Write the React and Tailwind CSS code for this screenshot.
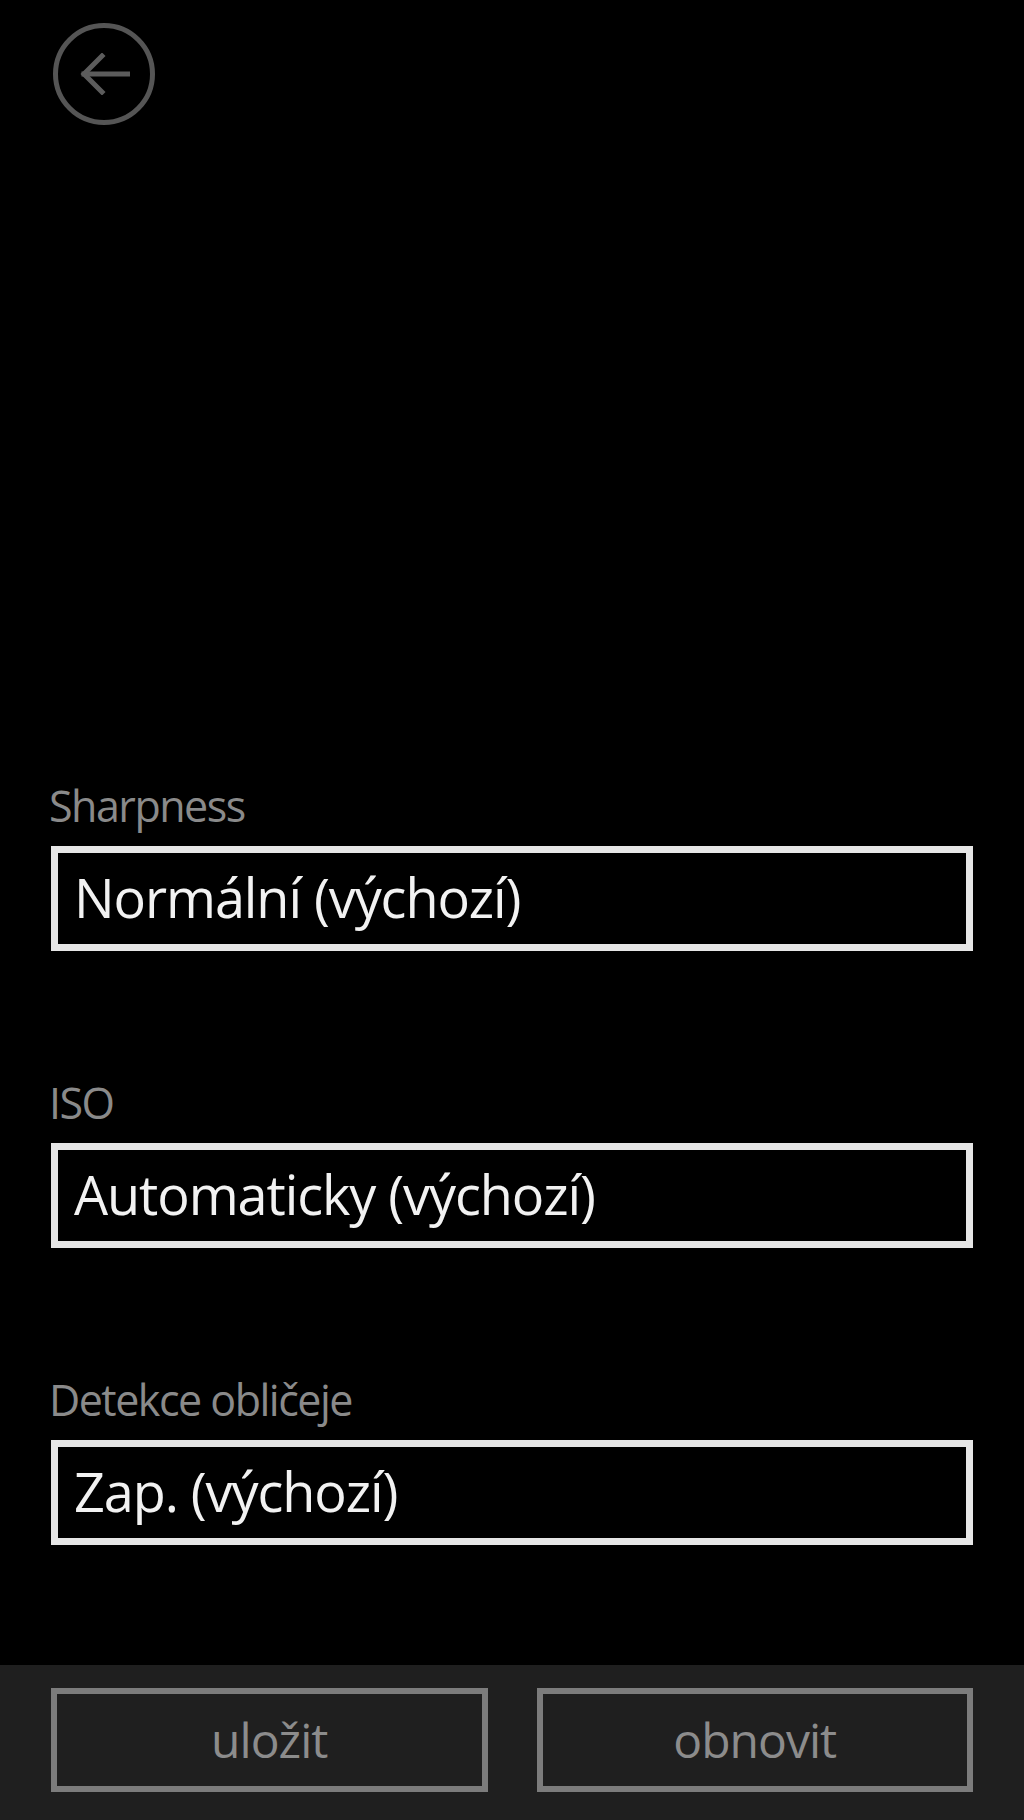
import React from 'react';

const fields = [
    { label: 'Sharpness', value: 'Normální (výchozí)' },
    { label: 'ISO', value: 'Automaticky (výchozí)' },
    { label: 'Detekce obličeje', value: 'Zap. (výchozí)' },
];

const BackButton = () => (
    <button className="w-[102px] h-[102px] rounded-full border-[5px] border-[#555555] flex items-center justify-center">
        <svg width="52" height="42" viewBox="0 0 52 42" fill="none" stroke="#5c5c5c" strokeWidth="5" strokeLinecap="square">
            <path d="M6 21 H50" />
            <path d="M24 3 L6 21 L24 39" />
        </svg>
    </button>
);

const Field = ({ label, value }) => (
    <div className="mt-[125px] first:mt-0">
        <div className="pt-[3px] -ml-[2px] text-[43px] leading-[48px] text-[#8a8a8a] tracking-[-0.035em]">{label}</div>
        <div className="mt-[16px] h-[105px] border-[7px] border-[#e6e6e6] bg-black pl-[16px] pt-[17px] text-[54px] leading-[54px] text-[#f2f2f2] tracking-[-0.02em]">
            {value}
        </div>
    </div>
);

export default function App() {
    return (
        <main className="w-[1024px] h-[1820px] bg-black flex flex-col" style={{ fontFamily: '"Open Sans", "Noto Sans", sans-serif' }}>
            <div className="pt-[23px] pl-[53px]">
                <BackButton />
            </div>

            <section className="mt-[654px] px-[51px] flex flex-col">
                {fields.map(f => (
                    <Field key={f.label} label={f.label} value={f.value} />
                ))}
            </section>

            <footer className="mt-auto h-[155px] bg-[#1f1f1f] px-[51px] pt-[23px] grid grid-cols-2 gap-[49px]">
                <button className="h-[104px] border-[6px] border-[#7c7c7c] text-[48px] text-[#8c8c8c] flex items-center justify-center tracking-[-0.02em]">uložit</button>
                <button className="h-[104px] border-[6px] border-[#7c7c7c] text-[48px] text-[#8c8c8c] flex items-center justify-center tracking-[-0.02em]">obnovit</button>
            </footer>
        </main>
    );
}
